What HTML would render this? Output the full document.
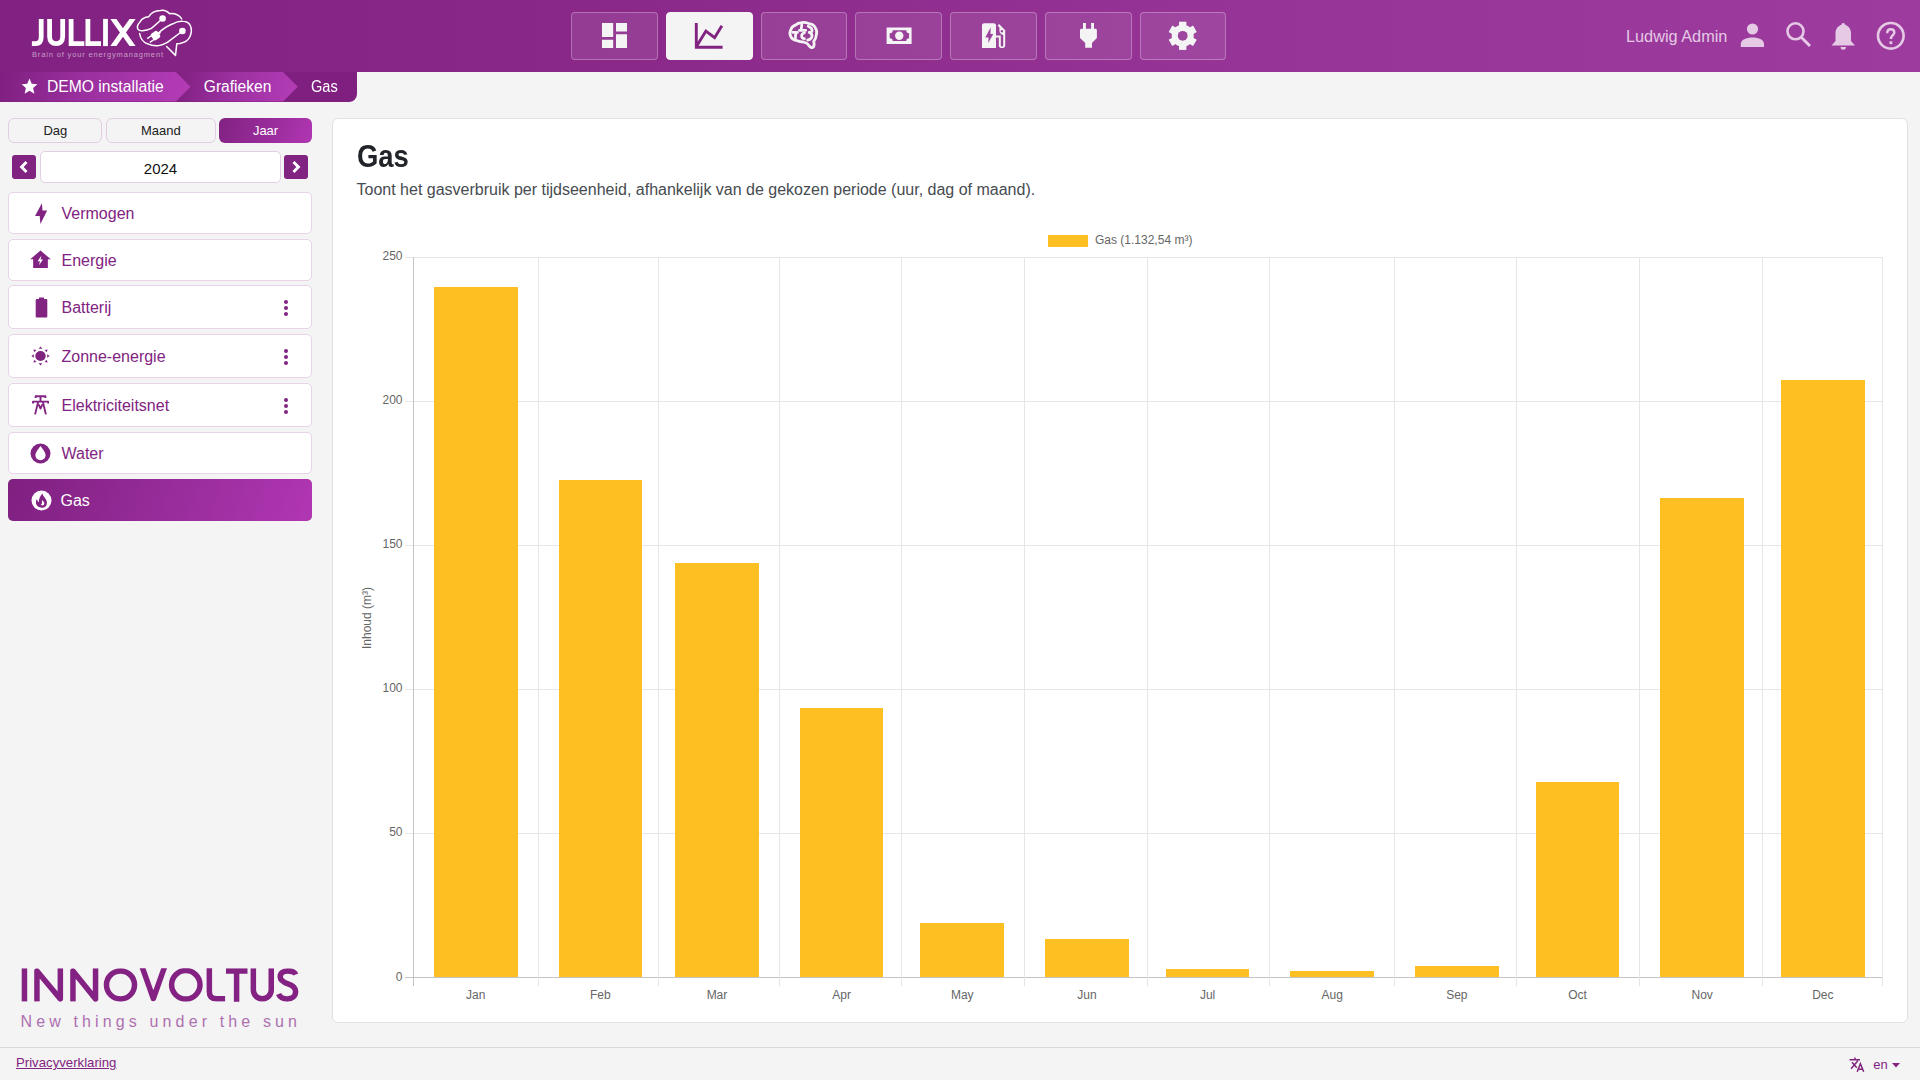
<!DOCTYPE html>
<html><head><meta charset="utf-8">
<style>
*{box-sizing:border-box;margin:0;padding:0}
html,body{width:1920px;height:1080px;overflow:hidden;background:#f4f4f4;font-family:"Liberation Sans",sans-serif;position:relative}
.a{position:absolute}
#hdr{left:0;top:0;width:1920px;height:72px;background:linear-gradient(90deg,#812181 0%,#8a2889 30%,#963597 65%,#9d3b9f 100%)}
.nb{position:absolute;top:12px;width:87px;height:48px;border:1px solid rgba(255,255,255,0.28);background:rgba(255,255,255,0.09);border-radius:4px}
.nb svg{position:absolute}
.nb.act{background:#f4f4f4;border-color:#f4f4f4}
.txt{position:absolute;white-space:nowrap;line-height:1}
.mi{position:absolute;left:8px;width:303.5px;background:#fff;border:1px solid #e8d3e8;border-radius:5px}
.mi .lb{position:absolute;left:52.5px;font-size:16px;line-height:1;color:#812381;white-space:nowrap}
.mi svg{position:absolute}
.dots{position:absolute;left:274.9px;width:4.2px}
.dots i{display:block;width:4.2px;height:4.2px;border-radius:50%;background:#812381;margin-bottom:1.9px}
.gl{position:absolute}
.bar{position:absolute;background:#fdbf22}
.yl{position:absolute;right:1517.5px;font-size:12px;line-height:1;color:#666;white-space:nowrap}
.xl{position:absolute;top:988.7px;width:60px;text-align:center;font-size:12px;line-height:1;color:#666}
</style></head><body>
<div id="hdr" class="a"></div>
<!-- JULLIX logo -->
<svg class="a" style="left:0;top:0" width="210" height="72" viewBox="0 0 210 72">
  <g fill="none" stroke="#fff" stroke-width="4.8">
    <path d="M41.2 18.9 V37 C41.2 41.8 38.8 43.7 35.5 43.7 H31.9"/>
    <path d="M49.6 18.9 V36.5 C49.6 41.5 52.4 43.7 56.15 43.7 C59.9 43.7 62.7 41.5 62.7 36.5 V18.9"/>
    <path d="M71.1 18.9 V43.7 H84.3"/>
    <path d="M87.9 18.9 V43.7 H101"/>
    <path d="M105.5 18.9 V46.1"/>
  </g>
  <path fill="#fff" d="M110.3 18.9 H116.4 L135.6 46.1 H129.5 Z M129.5 18.9 H135.6 L116.4 46.1 H110.3 Z"/>
  <text x="32" y="56.8" font-family="Liberation Sans" font-size="7.5" fill="rgba(255,255,255,0.56)" textLength="131" lengthAdjust="spacing">Brain of your energymanagment</text>
  <g fill="none" stroke="#fff" stroke-width="1.5" stroke-linecap="round" stroke-linejoin="round">
    <path d="M181.7 18.8 C180 15.5 175 13 169.7 13.7 C167 11 163 10 160.5 10.6 C155 10.8 151 13 148.8 16.7 C145 17 141.5 19 140.2 21.8 C138 24 137 26.5 137.6 28.5 C138.5 30.5 140.5 31 142.5 30.8 C146 30.5 149 29.5 151.4 28.4 L161 20"/>
    <path d="M139.6 33.5 C140.5 39 144 42.5 147.3 43.7 C151 45.5 154.5 46 157.5 45.8 C161 45.6 164.5 44 167.7 42.2 L180.5 32.5"/>
    <path d="M159 32.5 C163 29 168 25.5 172.8 23.8 C176 22 180 21 183 21.3 C187 21.5 189.5 23.5 190.5 26 C191.8 29 191.5 33 190 36.5 C188.5 40 185 42.5 180 43.5 L176.8 43.8 L175.5 55.4 L166.6 46.5"/>
  </g>
  <circle cx="162.6" cy="18.5" r="3.3" fill="#fff"/>
  <circle cx="182.4" cy="31" r="3.3" fill="#fff"/>
  <g transform="rotate(-35 155.6 35.6)" fill="#fff">
    <rect x="151.5" y="31.6" width="8" height="8" rx="2"/>
    <rect x="159" y="34.6" width="2.5" height="2"/>
    <rect x="147" y="32.6" width="5" height="1.4"/>
    <rect x="147" y="37.2" width="5" height="1.4"/>
  </g>
</svg>
<!-- nav buttons -->
<div class="nb" style="left:571px">
  <svg style="left:30px;top:10px" width="25.2" height="25.2" viewBox="3 3 18 18"><path fill="#f4f4f4" d="M3 13h8V3H3v10zm0 8h8v-6H3v6zm10 0h8V11h-8v10zm0-18v6h8V3h-8z"/></svg>
</div>
<div class="nb act" style="left:666px">
  <svg style="left:27px;top:10px" width="32" height="28" viewBox="0 0 32 28"><path fill="none" stroke="#812381" stroke-width="2.9" d="M2.3 -0.3 V24.2 H28.6 M2.6 23.2 L11.9 8.1 L20.6 14.7 L27.9 2.7"/></svg>
</div>
<div class="nb" style="left:761px;width:86px">
  <svg style="left:22px;top:5px" width="40" height="34" viewBox="0 0 1271 1080"><g fill="none" stroke="#f4f4f4" stroke-width="88" stroke-linecap="round" stroke-linejoin="round">
    <path d="M560 145 C640 130 720 150 790 175 C880 180 960 240 990 300 C1040 370 1050 450 1030 530 C1020 620 990 690 945 745 C960 800 970 870 935 920 C890 960 830 930 800 880 C770 830 720 790 640 770 C560 760 480 745 420 720 C330 710 250 660 215 590 C180 520 180 440 215 380 C230 310 290 250 360 225 C420 175 490 150 560 145 Z"/>
    <path d="M565 215 L545 375 M490 390 H690"/>
    <path d="M275 455 H430 M395 455 C360 520 350 580 365 630"/>
    <path d="M650 470 C590 490 560 530 560 570 C560 620 600 650 650 655"/>
    <path d="M770 260 C850 290 900 340 890 415 C880 445 840 455 800 455 C870 480 905 540 880 610 C860 660 810 690 750 700"/>
  </g></svg>
</div>
<div class="nb" style="left:855px">
  <svg style="left:29.5px;top:14px" width="26" height="18" viewBox="0 0 26 18"><path fill="#f4f4f4" fill-rule="evenodd" d="M0.6 0.4 H25.6 V16.9 H0.6 Z M6.7 3.3 H20.3 A2.9 2.9 0 0 0 23.1 6.3 V11.3 A2.9 2.9 0 0 0 20.3 14.1 H6.7 A2.9 2.9 0 0 0 3.7 11.3 V6.3 A2.9 2.9 0 0 0 6.7 3.3 Z"/><circle cx="13.25" cy="8.7" r="4.2" fill="#f4f4f4"/></svg>
</div>
<div class="nb" style="left:950px">
  <svg style="left:0;top:0" width="85" height="46" viewBox="0 0 85 46"><path fill="#f4f4f4" fill-rule="evenodd" d="M31 12.5 C31 11.2 32 10.3 33.2 10.3 H42.8 C44 10.3 45 11.2 45 12.5 V35 H31 Z M39.6 14.6 L34.3 24.5 H37.6 L37.2 30.1 L42.3 21.1 H39.5 Z"/>
  <path fill="#f4f4f4" fill-rule="evenodd" d="M46.6 12.6 L48.1 11.1 L54.2 17.2 V32.4 C54.2 36 47.8 36 47.8 32.4 V24.6 H45 V22.6 H49.8 V32.4 C49.8 33.8 52.2 33.8 52.2 32.4 V22 C50 21.6 48.4 20 48.4 17.8 V14.4 Z M50.9 16.9 A1.3 1.3 0 1 0 50.91 16.9 Z"/></svg>
</div>
<div class="nb" style="left:1045px">
  <svg style="left:32px;top:10px" width="22" height="28" viewBox="0 0 22 28"><path fill="#f4f4f4" d="M3 0 H5.9 V5.7 H11.1 V0 H14 V5.7 H15.4 C16.3 5.7 16.9 6.3 16.9 7.2 V15.1 L12 20 V24.8 H5.2 V20 L0 15.1 V7.2 C0 6.3 0.6 5.7 1.5 5.7 H3 Z" transform="translate(2,0)"/></svg>
</div>
<div class="nb" style="left:1140px;width:86px">
  <svg style="left:0;top:0" width="86" height="46" viewBox="0 0 86 46"><defs><mask id="gm"><rect width="86" height="46" fill="#fff"/><circle cx="41.7" cy="22.8" r="4.9" fill="#000"/></mask></defs><g fill="#f4f4f4" mask="url(#gm)"><circle cx="41.7" cy="22.8" r="11"/><rect x="38.05" y="8.70" width="7.3" height="8" transform="rotate(0 41.7 22.8)"/><rect x="38.05" y="8.70" width="7.3" height="8" transform="rotate(60 41.7 22.8)"/><rect x="38.05" y="8.70" width="7.3" height="8" transform="rotate(120 41.7 22.8)"/><rect x="38.05" y="8.70" width="7.3" height="8" transform="rotate(180 41.7 22.8)"/><rect x="38.05" y="8.70" width="7.3" height="8" transform="rotate(240 41.7 22.8)"/><rect x="38.05" y="8.70" width="7.3" height="8" transform="rotate(300 41.7 22.8)"/></g></svg>
</div>
<!-- user area -->
<div class="txt" style="left:1626px;top:28.4px;font-size:16.3px;color:#e5c9e5">Ludwig Admin</div>
<svg class="a" style="left:1740px;top:23px" width="25" height="25" viewBox="0 0 25 25"><circle cx="12.5" cy="6" r="5.6" fill="#e5c9e5"/><path fill="#e5c9e5" d="M0.8 24 V21 C0.8 17 6 14.6 12.5 14.6 C19 14.6 24 17 24 21 V24 Z"/></svg>
<svg class="a" style="left:1785px;top:21px" width="27" height="27" viewBox="0 0 27 27"><circle cx="10.5" cy="10.3" r="8" fill="none" stroke="#e5c9e5" stroke-width="2.6"/><path d="M16.5 16.5 L25 25" stroke="#e5c9e5" stroke-width="3"/></svg>
<svg class="a" style="left:1831px;top:22px" width="25" height="29" viewBox="0 0 25 29"><path fill="#e5c9e5" d="M12.3 1 C13.5 1 14 2 14 2.8 C17.5 4 20 7 20 11.5 V19 L24 23.5 H0.5 L4.5 19 V11.5 C4.5 7 7 4 10.5 2.8 C10.5 2 11 1 12.3 1 Z M9.5 25 H15 C15 26.8 14 27.8 12.3 27.8 C10.5 27.8 9.5 26.8 9.5 25 Z"/></svg>
<svg class="a" style="left:1876px;top:21px" width="30" height="30" viewBox="0 0 30 30"><circle cx="14.8" cy="14.8" r="12.8" fill="none" stroke="#e5c9e5" stroke-width="2.6"/><path d="M11.2 12.2 C11.2 9.4 12.8 8.3 14.8 8.3 C17 8.3 18.3 9.6 18.3 11.4 C18.3 14 14.9 14.3 14.9 17.9" fill="none" stroke="#e5c9e5" stroke-width="2.5"/><rect x="13.5" y="20.3" width="2.8" height="2.8" fill="#e5c9e5"/></svg>
<!-- breadcrumb -->
<div class="a" style="left:0;top:72px;width:357px;height:29.5px;background:#7f2080;border-bottom-right-radius:8px;overflow:hidden">
  <div class="a" style="left:0;top:0;width:191px;height:29.5px;background:linear-gradient(100deg,#7f2080 0%,#9b30a0 45%,#b43cb6 100%);clip-path:polygon(0 0,176.2px 0,190.7px 14.75px,176.2px 29.5px,0 29.5px)"></div>
  <div class="a" style="left:176.2px;top:0;width:122px;height:29.5px;background:linear-gradient(100deg,#7f2080 0%,#9b30a0 45%,#b43cb6 100%);clip-path:polygon(0 0,106.8px 0,121.6px 14.75px,106.8px 29.5px,0 29.5px,14.5px 14.75px)"></div>
</div>
<svg class="a" style="left:20px;top:76.5px" width="19" height="19" viewBox="0 0 24 24"><path fill="#fff" d="M12 17.27L18.18 21l-1.64-7.03L22 9.24l-7.19-.61L12 2 9.19 8.63 2 9.24l5.46 4.73L5.82 21z"/></svg>
<div class="txt" style="left:46.9px;top:79px;font-size:15.7px;color:#fff">DEMO installatie</div>
<div class="txt" style="left:203.8px;top:78.8px;font-size:15.6px;color:#fff">Grafieken</div>
<div class="txt" style="left:310.8px;top:78.8px;font-size:16px;color:#fff;transform:scaleX(0.91);transform-origin:0 0">Gas</div>

<!-- period buttons -->
<div class="a" style="left:8.25px;top:118.25px;width:94.2px;height:24.6px;border:1px solid #e3cde3;border-radius:6px"></div>
<div class="txt" style="left:8.25px;width:94.2px;text-align:center;top:124.4px;font-size:13px;color:#212121">Dag</div>
<div class="a" style="left:106.2px;top:118.25px;width:109.4px;height:24.6px;border:1px solid #e3cde3;border-radius:6px"></div>
<div class="txt" style="left:106.2px;width:109.4px;text-align:center;top:124.4px;font-size:13px;color:#212121">Maand</div>
<div class="a" style="left:219.1px;top:118px;width:92.9px;height:25px;border-radius:6px;background:linear-gradient(110deg,#812381 0%,#9a2c9c 55%,#b036b2 100%)"></div>
<div class="txt" style="left:219.1px;width:92.9px;text-align:center;top:124.4px;font-size:13px;color:#fff">Jaar</div>

<!-- year nav -->
<div class="a" style="left:12px;top:155px;width:24px;height:24px;background:#812381;border-radius:3px"></div>
<svg class="a" style="left:12px;top:155px" width="24" height="24" viewBox="0 0 24 24"><path d="M14.5 7 L9.6 12 L14.5 17" fill="none" stroke="#fff" stroke-width="2.9"/></svg>
<div class="a" style="left:40.4px;top:151.25px;width:240.2px;height:31.8px;background:#fff;border:1px solid #e3cde3;border-radius:5px"></div>
<div class="txt" style="left:40.4px;width:240.2px;text-align:center;top:161.3px;font-size:15px;color:#111">2024</div>
<div class="a" style="left:284px;top:155px;width:24px;height:24px;background:#812381;border-radius:3px"></div>
<svg class="a" style="left:284px;top:155px" width="24" height="24" viewBox="0 0 24 24"><path d="M9.5 7 L14.4 12 L9.5 17" fill="none" stroke="#fff" stroke-width="2.9"/></svg>

<!-- menu items -->
<div class="mi" style="top:192px;height:42px">
  <svg style="left:26px;top:9.5px" width="13" height="22" viewBox="0 0 13 22"><path fill="#812381" d="M6.9 0.2 L0 13 L4.7 13 L5.4 21 L12.2 7.4 L7.5 7.4 Z"/></svg>
  <div class="lb" style="top:13.1px">Vermogen</div>
</div>
<div class="mi" style="top:239px;height:42px">
  <svg style="left:21px;top:10.4px" width="21" height="18.5" viewBox="0 0 20 18" preserveAspectRatio="none"><path fill="#812381" d="M10 0.5 L19.8 9 H17 V17.5 H3 V9 H0.2 Z"/><path fill="#fff" d="M10.8 5.5 L7.2 11 H9.5 L8.6 14.8 L12.4 9.3 H10.1 Z"/></svg>
  <div class="lb" style="top:12.8px">Energie</div>
</div>
<div class="mi" style="top:285px;height:44px">
  <svg style="left:25.5px;top:10.7px" width="13" height="21" viewBox="0 0 13 21"><path fill="#812381" d="M4 0.5 H9 V2 H11.2 C11.8 2 12.3 2.5 12.3 3.1 V19.5 C12.3 20.1 11.8 20.6 11.2 20.6 H1.8 C1.2 20.6 0.7 20.1 0.7 19.5 V3.1 C0.7 2.5 1.2 2 1.8 2 H4 Z"/></svg>
  <div class="lb" style="top:13.9px">Batterij</div>
  <div class="dots" style="top:14px"><i></i><i></i><i></i></div>
</div>
<div class="mi" style="top:334px;height:44px">
  <svg style="left:22.1px;top:11.3px" width="19" height="20" viewBox="0.4 0.4 18.2 20.2" preserveAspectRatio="none"><circle cx="9.5" cy="10.5" r="5.0" fill="#812381"/><g fill="#812381"><path d="M9.5 0.8 L11.3 3.3 H7.7 Z"/><path d="M9.5 20.2 L11.3 17.7 H7.7 Z"/><path d="M0.8 10.5 L3.1 8.7 V12.3 Z"/><path d="M18.2 10.5 L15.9 8.7 V12.3 Z"/><path d="M2.6 3.9 L5.6 4.5 L3.6 6.6 Z"/><path d="M16.4 3.9 L13.4 4.5 L15.4 6.6 Z"/><path d="M2.6 17.1 L5.6 16.5 L3.6 14.4 Z"/><path d="M16.4 17.1 L13.4 16.5 L15.4 14.4 Z"/></g></svg>
  <div class="lb" style="top:13.9px">Zonne-energie</div>
  <div class="dots" style="top:14px"><i></i><i></i><i></i></div>
</div>
<div class="mi" style="top:383px;height:44px">
  <svg style="left:23.3px;top:11.2px" width="17" height="21" viewBox="0 0 17 21"><g fill="none" stroke="#812381" stroke-width="1.9" stroke-linejoin="round"><path d="M3.6 2.9 V1.2 H13.4 V2.9 M1 8.4 V6.6 H16.2 V8.4 M8.5 1.2 V6.6"/><path d="M6.2 6.6 L3.1 19.4 M10.8 6.6 L13.9 19.4 M6.6 9.4 L8.5 13.6 L10.4 9.4"/></g></svg>
  <div class="lb" style="top:13.9px">Elektriciteitsnet</div>
  <div class="dots" style="top:14px"><i></i><i></i><i></i></div>
</div>
<div class="mi" style="top:432px;height:42px">
  <svg style="left:21.4px;top:9.5px" width="21" height="21" viewBox="0 0 21 21"><circle cx="10.5" cy="10.5" r="10" fill="#812381"/><path fill="#fff" d="M10.5 2.9 C12.5 6 15.6 9 15.6 12.1 C15.6 15.1 13.4 17.2 10.5 17.2 C7.6 17.2 5.4 15.1 5.4 12.1 C5.4 9 8.5 6 10.5 2.9 Z"/></svg>
  <div class="lb" style="top:13px">Water</div>
</div>
<div class="a" style="left:8px;top:479px;width:303.5px;height:42px;border-radius:5px;background:linear-gradient(110deg,#7f2080 0%,#962c99 50%,#b136b3 100%)">
  <svg class="a" style="left:22.9px;top:11px" width="21" height="21" viewBox="0 0 21 21"><circle cx="10.5" cy="10.5" r="10" fill="#fff"/><path fill="#812381" fill-rule="evenodd" d="M11.3 3.6 C12 6.5 14.5 8 15.5 10.5 C16.5 13 15.8 15.8 14 16.9 C12.5 17.9 9 18 7 16.6 C5 15 4.5 12.5 5.2 10.5 L5.9 8.9 C6.3 10.5 7 11.6 8 12.1 C7.8 9.5 8.5 7 11.3 3.6 Z M11.1 10.1 C12.5 11.3 13.6 12.6 13.3 14 C13 15.2 12 15.6 11 15.3 L9.6 14.9 C10.5 14.3 11.2 13.4 10.9 12.5 C10.9 11.5 11 10.8 11.1 10.1 Z"/></svg>
  <div class="txt" style="left:52.5px;top:14.1px;font-size:16px;color:#fff">Gas</div>
</div>

<!-- innovoltus logo -->
<svg class="a" style="left:0;top:950px" width="320" height="90" viewBox="0 950 320 90">
  <defs><clipPath id="ic"><rect x="0" y="968.2" width="320" height="33.5"/></clipPath></defs><g fill="none" stroke="#832283" stroke-width="5.5" stroke-linejoin="round" clip-path="url(#ic)">
    <path d="M24.45 968.3 V1001.6"/>
    <path d="M36.95 1001.6 V971 L60.35 999 V968.3"/>
    <path d="M72.95 1001.6 V971 L95.55 999 V968.3"/>
    <circle cx="120.5" cy="984.95" r="14"/>
    <path d="M141.8 966 L153.35 998.5 L164.9 966"/>
    <circle cx="185.8" cy="984.8" r="14.2"/>
    <path d="M209.35 966 V991.5 C209.35 996.6 211.8 998.85 216.5 998.85 H225.1"/>
    <path d="M226 971.05 H247.5 M236.6 971.05 V1003"/>
    <path d="M253.35 968.3 V989.9 A8.95 8.95 0 0 0 271.25 989.9 V968.3"/>
    <path d="M295.8 974.5 C294.5 971.5 291.5 971 287.8 971 C283 971 280.2 973.2 280.2 976.8 C280.2 981 284 982.5 288 983.8 C292.5 985.2 295.6 987 295.6 991.5 C295.6 996 292 998.9 287.5 998.9 C283.5 998.9 280 997.5 278.6 994"/>
  </g>
  <text x="20.5" y="1027.2" font-family="Liberation Sans" font-size="16" fill="#ad70b0" textLength="276.5" lengthAdjust="spacing">New things under the sun</text>
</svg>

<!-- footer -->
<div class="a" style="left:0;top:1046.5px;width:1920px;height:1px;background:#d9d9d9"></div>
<div class="txt" style="left:16px;top:1056px;font-size:13.2px;color:#812381;text-decoration:underline">Privacyverklaring</div>
<svg class="a" style="left:1849px;top:1056.5px" width="16" height="15" viewBox="0 0 16 15"><g fill="none" stroke="#812381" stroke-width="1.5"><path d="M0.5 2.8 H11 M6 0.5 V2.8 M3 5.3 L7.8 10.8 M8.9 3.7 L2 11.7"/><path d="M8.2 14.8 L11.4 6.8 L14.7 14.8 M9.3 12.2 H13.6"/></g></svg>
<div class="txt" style="left:1873.3px;top:1058px;font-size:13px;color:#812381">en</div>
<svg class="a" style="left:1892px;top:1063px" width="8" height="5" viewBox="0 0 8 5"><path d="M0 0 H8 L4 4.5 Z" fill="#812381"/></svg>
<div class="a" style="left:332px;top:118px;width:1576px;height:905px;background:#fff;border:1px solid #dee2e6;border-radius:6px"></div>
<div class="txt" style="left:356.8px;top:140.8px;font-size:30.5px;font-weight:700;color:#212529;transform:scaleX(0.9);transform-origin:0 0">Gas</div>
<div class="txt" style="left:356.5px;top:182.4px;font-size:16px;color:#474b50">Toont het gasverbruik per tijdseenheid, afhankelijk van de gekozen periode (uur, dag of maand).</div>
<div class="a" style="left:1048px;top:235px;width:40px;height:11.7px;background:#fdbf22"></div>
<div class="txt" style="left:1095px;top:234.4px;font-size:12px;color:#666">Gas (1.132,54 m³)</div>
<div class="txt" style="left:336px;top:611.6px;width:62px;text-align:center;font-size:12px;color:#666;transform:rotate(-90deg);transform-origin:31px 6px">Inhoud (m³)</div>
<div class="gl" style="left:405px;top:257.00px;width:1478.1px;height:1px;background:#e6e6e6"></div>
<div class="yl" style="top:249.64px">250</div>
<div class="gl" style="left:405px;top:400.94px;width:1478.1px;height:1px;background:#e6e6e6"></div>
<div class="yl" style="top:393.74px">200</div>
<div class="gl" style="left:405px;top:544.88px;width:1478.1px;height:1px;background:#e6e6e6"></div>
<div class="yl" style="top:538.04px">150</div>
<div class="gl" style="left:405px;top:688.82px;width:1478.1px;height:1px;background:#e6e6e6"></div>
<div class="yl" style="top:682.24px">100</div>
<div class="gl" style="left:405px;top:832.76px;width:1478.1px;height:1px;background:#e6e6e6"></div>
<div class="yl" style="top:826.44px">50</div>
<div class="gl" style="left:405px;top:976.70px;width:1478.1px;height:1px;background:#c4c4c4"></div>
<div class="yl" style="top:970.54px">0</div>
<div class="gl" style="left:413.00px;top:257px;width:1px;height:729px;background:#c4c4c4"></div>
<div class="gl" style="left:538.00px;top:257px;width:1px;height:729px;background:#e6e6e6"></div>
<div class="gl" style="left:658.00px;top:257px;width:1px;height:729px;background:#e6e6e6"></div>
<div class="gl" style="left:779.00px;top:257px;width:1px;height:729px;background:#e6e6e6"></div>
<div class="gl" style="left:901.00px;top:257px;width:1px;height:729px;background:#e6e6e6"></div>
<div class="gl" style="left:1024.00px;top:257px;width:1px;height:729px;background:#e6e6e6"></div>
<div class="gl" style="left:1147.00px;top:257px;width:1px;height:729px;background:#e6e6e6"></div>
<div class="gl" style="left:1269.00px;top:257px;width:1px;height:729px;background:#e6e6e6"></div>
<div class="gl" style="left:1394.00px;top:257px;width:1px;height:729px;background:#e6e6e6"></div>
<div class="gl" style="left:1516.00px;top:257px;width:1px;height:729px;background:#e6e6e6"></div>
<div class="gl" style="left:1639.00px;top:257px;width:1px;height:729px;background:#e6e6e6"></div>
<div class="gl" style="left:1762.00px;top:257px;width:1px;height:729px;background:#e6e6e6"></div>
<div class="gl" style="left:1882.00px;top:257px;width:1px;height:729px;background:#e6e6e6"></div>
<div class="bar" style="left:433.85px;top:287.10px;width:83.7px;height:689.90px"></div>
<div class="xl" style="left:445.70px">Jan</div>
<div class="bar" style="left:558.51px;top:480.00px;width:83.7px;height:497.00px"></div>
<div class="xl" style="left:570.36px">Feb</div>
<div class="bar" style="left:675.12px;top:562.75px;width:83.7px;height:414.25px"></div>
<div class="xl" style="left:686.97px">Mar</div>
<div class="bar" style="left:799.78px;top:707.90px;width:83.7px;height:269.10px"></div>
<div class="xl" style="left:811.63px">Apr</div>
<div class="bar" style="left:920.42px;top:923.30px;width:83.7px;height:53.70px"></div>
<div class="xl" style="left:932.27px">May</div>
<div class="bar" style="left:1045.07px;top:938.70px;width:83.7px;height:38.30px"></div>
<div class="xl" style="left:1056.92px">Jun</div>
<div class="bar" style="left:1165.71px;top:969.10px;width:83.7px;height:7.90px"></div>
<div class="xl" style="left:1177.56px">Jul</div>
<div class="bar" style="left:1290.37px;top:971.00px;width:83.7px;height:6.00px"></div>
<div class="xl" style="left:1302.22px">Aug</div>
<div class="bar" style="left:1415.02px;top:966.00px;width:83.7px;height:11.00px"></div>
<div class="xl" style="left:1426.87px">Sep</div>
<div class="bar" style="left:1535.66px;top:781.80px;width:83.7px;height:195.20px"></div>
<div class="xl" style="left:1547.51px">Oct</div>
<div class="bar" style="left:1660.32px;top:498.20px;width:83.7px;height:478.80px"></div>
<div class="xl" style="left:1672.17px">Nov</div>
<div class="bar" style="left:1780.95px;top:380.25px;width:83.7px;height:596.75px"></div>
<div class="xl" style="left:1792.80px">Dec</div></body></html>
